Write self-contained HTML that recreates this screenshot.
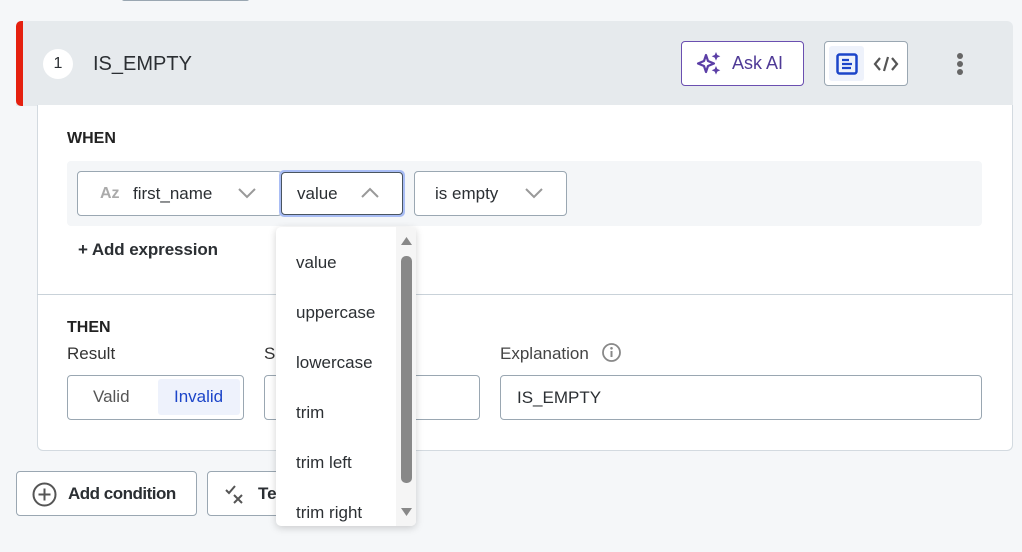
<!DOCTYPE html>
<html><head><style>
*{box-sizing:border-box;margin:0;padding:0}
body{width:1022px;height:552px;background:#f5f7f9;font-family:"Liberation Sans",sans-serif;color:#2b2f33;position:relative;overflow:hidden}
.a{position:absolute}
.box{position:absolute;border:1px solid #9aa7b2;border-radius:4px;background:#fff}
.t{position:absolute;font-size:17px;white-space:nowrap}
</style></head><body>
<div class="a" style="left:122px;top:-3px;width:127px;height:4px;border:1px solid #9aa7b2;border-radius:3px"></div>
<!-- header -->
<div class="a" style="left:16px;top:21px;width:997px;height:85px;background:#e6eaed;border-radius:6px 6px 0 0"></div>
<div class="a" style="left:16px;top:21px;width:7px;height:85px;background:#e5200f;border-radius:5px 0 0 5px"></div>
<div class="a" style="left:43px;top:49px;width:30px;height:30px;border-radius:50%;background:#fff;font-size:16px;text-align:center;line-height:30px">1</div>
<div class="t" style="left:93px;top:53px;font-size:20px">IS_EMPTY</div>
<div class="box" style="left:681px;top:41px;width:123px;height:45px;border-color:#6a4fb0"></div>
<svg class="a" style="left:696px;top:51px" width="28" height="25" viewBox="0 0 28 25"><path d="M10 4 L12 10 L18 12.5 L12 15 L10 21 L8 15 L2 12.5 L8 10Z" fill="none" stroke="#5b3ea6" stroke-width="2.2" stroke-linejoin="round"/><path d="M20 1 l1.3 3 3 1.3 -3 1.3 -1.3 3 -1.3 -3 -3 -1.3 3 -1.3z M20 15 l1.3 3 3 1.3 -3 1.3 -1.3 3 -1.3 -3 -3 -1.3 3 -1.3z" fill="#5b3ea6"/></svg>
<div class="t" style="left:732px;top:53px;color:#4f3a96;font-size:18px">Ask AI</div>
<div class="box" style="left:824px;top:41px;width:84px;height:45px"></div>
<div class="a" style="left:829px;top:46px;width:35px;height:35px;background:#eef2fb;border-radius:3px"></div>
<svg class="a" style="left:836px;top:53px" width="22" height="22" viewBox="0 0 22 22"><rect x="1.5" y="1.5" width="19" height="19" rx="2" fill="none" stroke="#1c45c9" stroke-width="2.5"/><path d="M6 7h7M6 11h10M6 15h9" stroke="#1c45c9" stroke-width="2.2"/></svg>
<svg class="a" style="left:873px;top:54px" width="26" height="20" viewBox="0 0 26 20"><path d="M7 4 L2 10 L7 16 M19 4 L24 10 L19 16 M15 3 L11 17" fill="none" stroke="#555" stroke-width="2.2"/></svg>
<div class="a" style="left:957px;top:53px;width:6px;height:6px;border-radius:50%;background:#666"></div>
<div class="a" style="left:957px;top:61px;width:6px;height:6px;border-radius:50%;background:#666;"></div>
<div class="a" style="left:957px;top:69px;width:6px;height:6px;border-radius:50%;background:#666"></div>
<!-- body -->
<div class="a" style="left:37px;top:105px;width:976px;height:346px;background:#fff;border:1px solid #d3dae0;border-top:none;border-radius:0 0 6px 6px"></div>
<div class="a" style="left:37px;top:294px;width:976px;height:1px;background:#c9d2d9"></div>
<div class="t" style="left:67px;top:130px;font-size:16px;font-weight:bold;color:#222">WHEN</div>
<div class="a" style="left:67px;top:161px;width:915px;height:65px;background:#f4f6f8;border-radius:4px"></div>
<div class="box" style="left:77px;top:171px;width:205px;height:45px"></div>
<div class="t" style="left:100px;top:185px;color:#aaa;font-weight:bold;font-size:16px">Az</div>
<div class="t" style="left:133px;top:184px">first_name</div>
<svg class="a" style="left:237px;top:187px" width="20" height="12"><path d="M2 2l8 8 8-8" fill="none" stroke="#999" stroke-width="2"/></svg>
<div class="box" style="left:279px;top:170px;width:126px;height:47px;border:3px solid #a9bdf5;border-radius:5px"></div>
<div class="box" style="left:281px;top:172px;width:122px;height:43px;border-color:#4a5560"></div>
<div class="t" style="left:297px;top:184px">value</div>
<svg class="a" style="left:360px;top:187px" width="20" height="12"><path d="M2 10l8-8 8 8" fill="none" stroke="#999" stroke-width="2"/></svg>
<div class="box" style="left:414px;top:171px;width:153px;height:45px"></div>
<div class="t" style="left:435px;top:184px">is empty</div>
<svg class="a" style="left:524px;top:187px" width="20" height="12"><path d="M2 2l8 8 8-8" fill="none" stroke="#999" stroke-width="2"/></svg>
<div class="t" style="left:78px;top:240px;font-weight:bold;font-size:17px;letter-spacing:-0.1px">+ Add expression</div>
<div class="t" style="left:67px;top:319px;font-size:16px;font-weight:bold;color:#222">THEN</div>
<div class="t" style="left:67px;top:344px;font-size:17px;color:#333">Result</div>
<div class="t" style="left:264px;top:344px;font-size:17px;color:#333">S</div>
<div class="t" style="left:500px;top:344px;font-size:17px;color:#444">Explanation</div>
<svg class="a" style="left:601px;top:342px" width="21" height="21"><circle cx="10.5" cy="10.5" r="8.5" fill="none" stroke="#888" stroke-width="1.8"/><path d="M10.5 9v6" stroke="#888" stroke-width="2"/><circle cx="10.5" cy="6.3" r="1.3" fill="#888"/></svg>
<div class="box" style="left:67px;top:375px;width:177px;height:45px"></div>
<div class="a" style="left:158px;top:379px;width:82px;height:36px;background:#eef2fc;border-radius:3px"></div>
<div class="t" style="left:93px;top:387px;color:#555">Valid</div>
<div class="t" style="left:174px;top:387px;color:#1c45c9">Invalid</div>
<div class="box" style="left:264px;top:375px;width:216px;height:45px"></div>
<div class="box" style="left:500px;top:375px;width:482px;height:45px"></div>
<div class="t" style="left:517px;top:388px;font-size:17px">IS_EMPTY</div>
<div class="box" style="left:16px;top:471px;width:181px;height:45px"></div>
<svg class="a" style="left:32px;top:482px" width="25" height="25"><circle cx="12.5" cy="12.5" r="11" fill="none" stroke="#555" stroke-width="2"/><path d="M12.5 6.5v12M6.5 12.5h12" stroke="#555" stroke-width="2"/></svg>
<div class="t" style="left:68px;top:484px;font-weight:bold;letter-spacing:-0.5px">Add condition</div>
<div class="box" style="left:207px;top:471px;width:100px;height:45px"></div>
<svg class="a" style="left:224px;top:484px" width="24" height="20"><path d="M2 6l3 3 6-7M10 11l8 8M18 11l-8 8" fill="none" stroke="#555" stroke-width="2"/></svg>
<div class="t" style="left:258px;top:484px;font-weight:bold">Te</div>
<!-- dropdown -->
<div class="a" style="left:276px;top:227px;width:140px;height:299px;background:#fff;border-radius:5px;box-shadow:0 2px 8px rgba(0,0,0,.18);overflow:hidden">
<div class="a" style="left:120px;top:0;width:20px;height:299px;background:#f5f5f5"></div>
<div class="a" style="left:125px;top:29px;width:11px;height:227px;background:#888;border-radius:5px"></div>
<svg class="a" style="left:124px;top:9px" width="13" height="10"><path d="M1 9L6.5 1 12 9z" fill="#888"/></svg>
<svg class="a" style="left:124px;top:280px" width="13" height="10"><path d="M1 1L6.5 9 12 1z" fill="#888"/></svg>
<div class="t" style="left:20px;top:26px">value</div>
<div class="t" style="left:20px;top:76px">uppercase</div>
<div class="t" style="left:20px;top:126px">lowercase</div>
<div class="t" style="left:20px;top:176px">trim</div>
<div class="t" style="left:20px;top:226px">trim left</div>
<div class="t" style="left:20px;top:276px">trim right</div>
</div>
</body></html>
